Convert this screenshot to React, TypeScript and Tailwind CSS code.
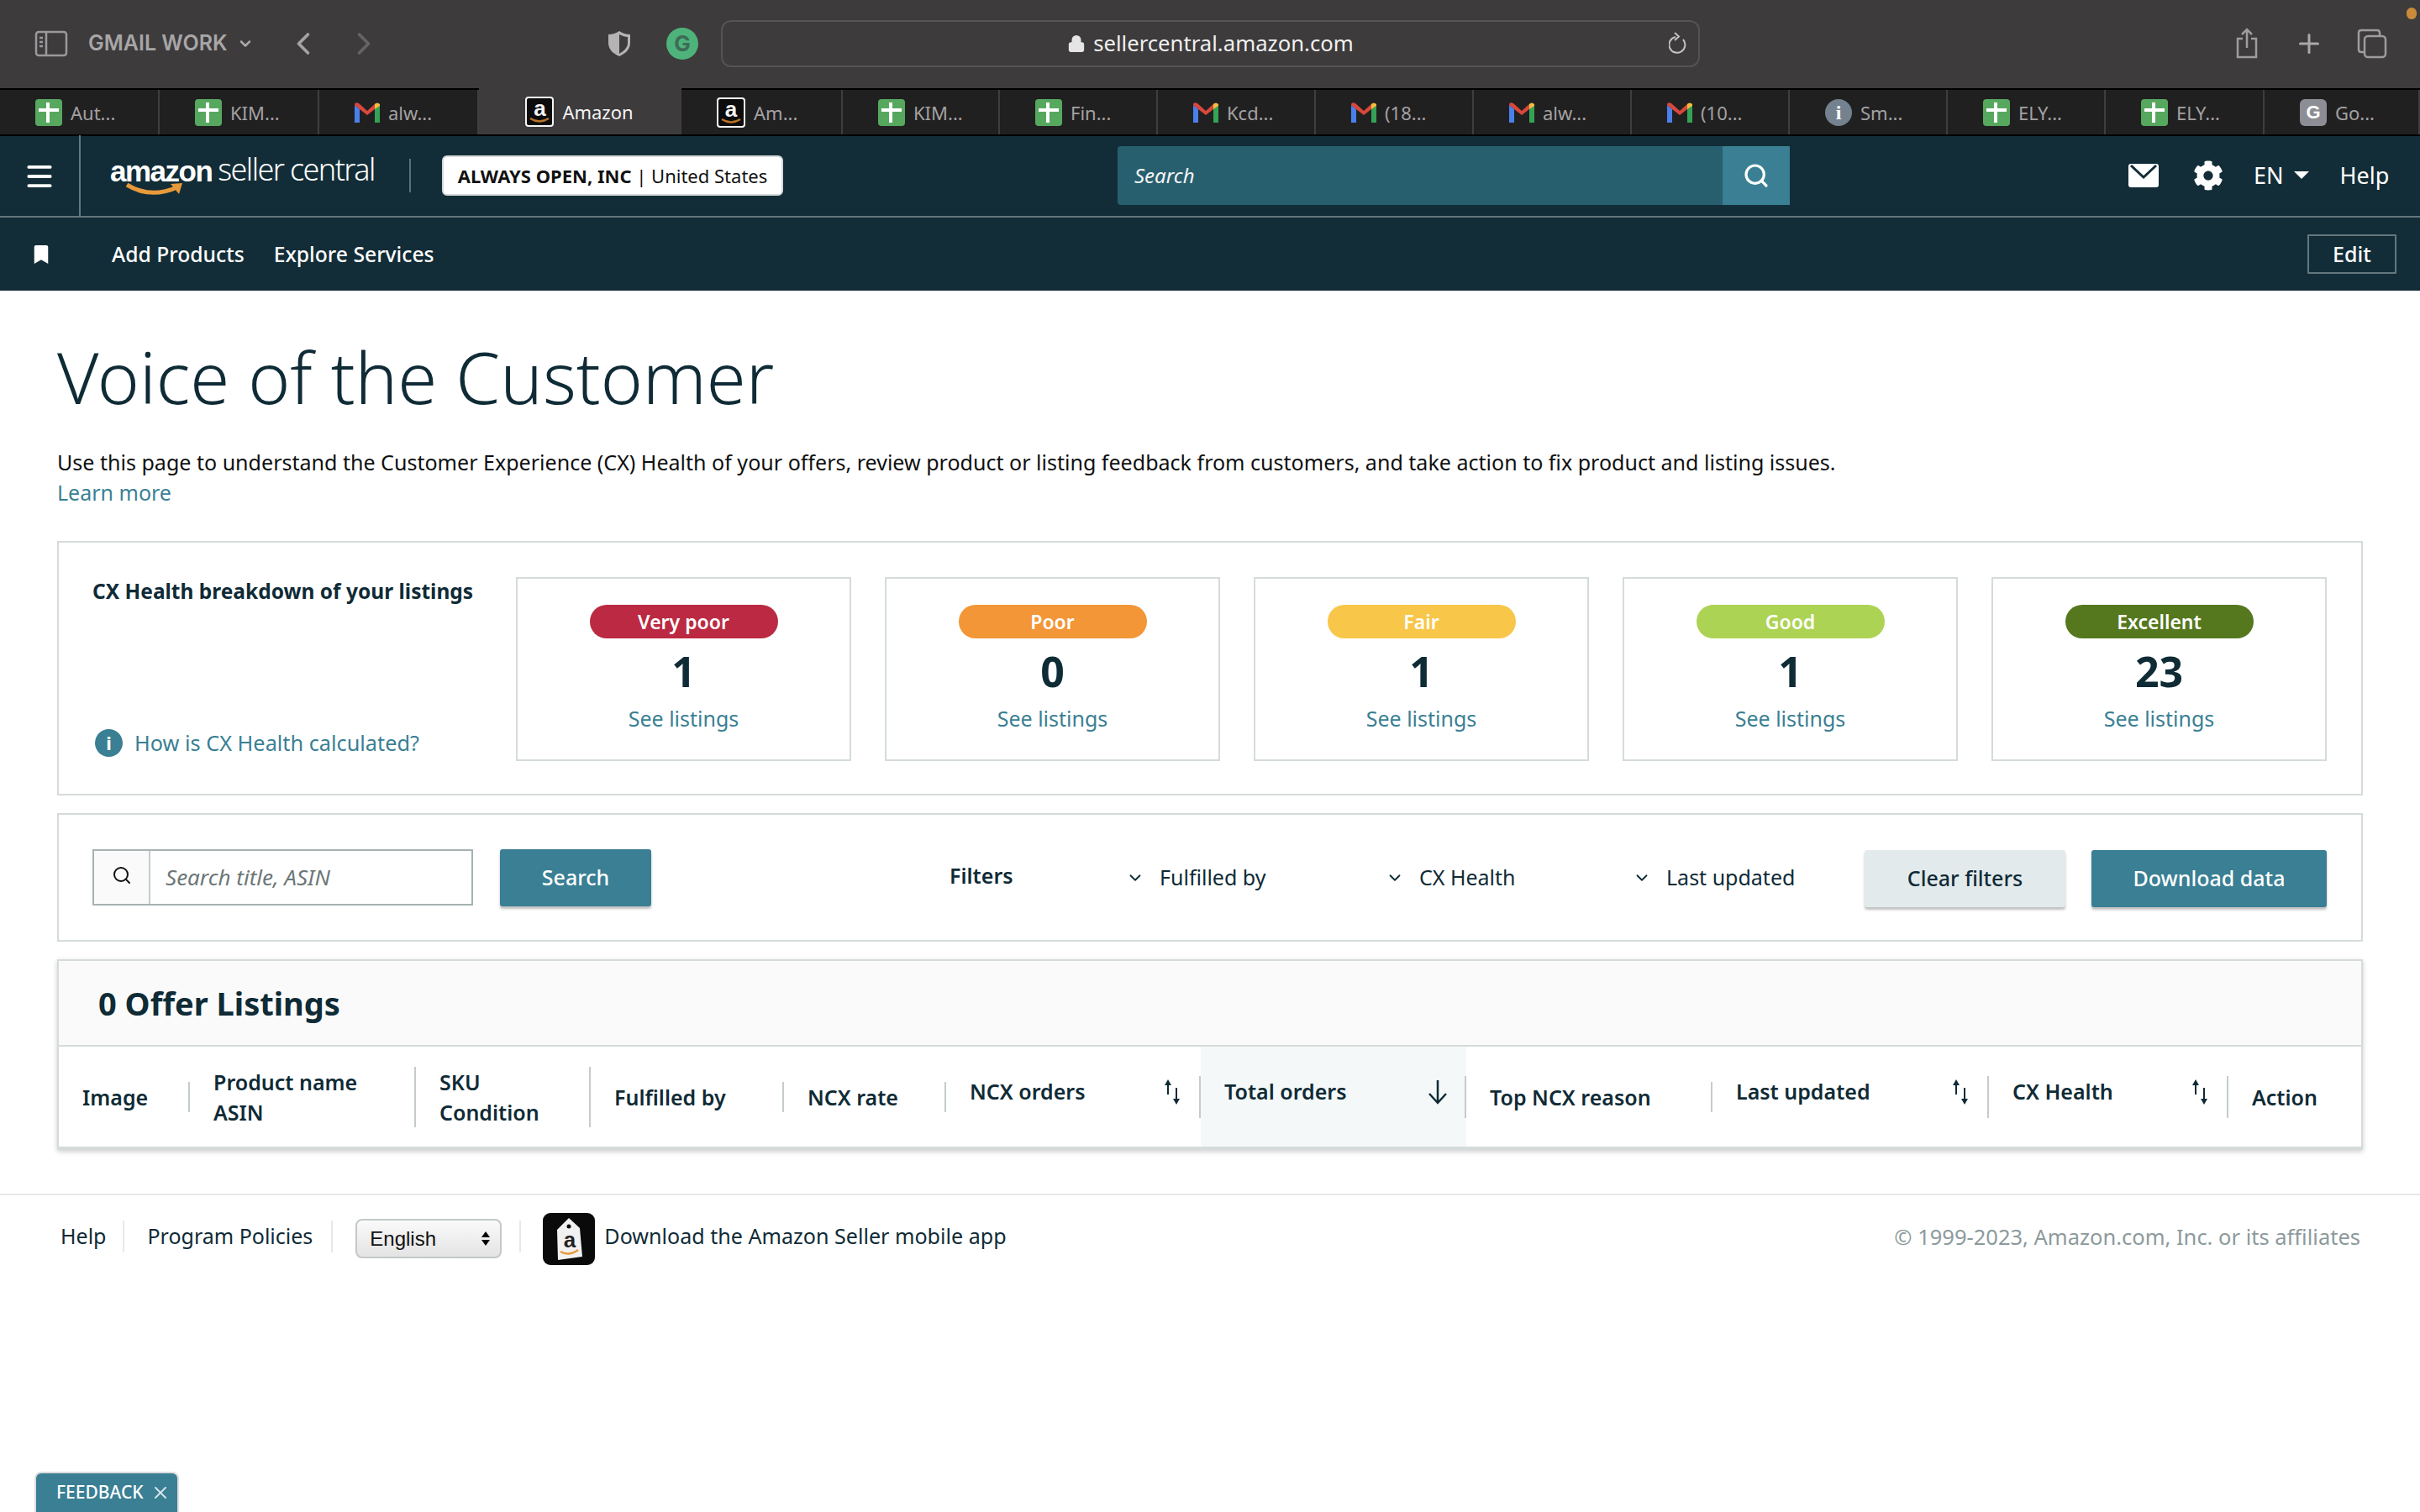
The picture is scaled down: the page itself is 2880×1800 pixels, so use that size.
import React from 'react';
import { ChevronLeft, ChevronRight, ChevronDown, Lock, Search, Plus, X, Menu } from 'lucide-react';
import { FaCog, FaBookmark } from 'react-icons/fa';

type TabKind = 'sheet' | 'gmail' | 'amazon' | 'info' | 'google';

const TABS: { kind: TabKind; label: string; width: string; active?: boolean }[] = [
    { kind: 'sheet', label: 'Aut...', width: 'w-[190px]' },
    { kind: 'sheet', label: 'KIM...', width: 'w-[190px]' },
    { kind: 'gmail', label: 'alw...', width: 'w-[190px]' },
    { kind: 'amazon', label: 'Amazon', width: 'w-[241px]', active: true },
    { kind: 'amazon', label: 'Am...', width: 'w-[192px]' },
    { kind: 'sheet', label: 'KIM...', width: 'w-[187px]' },
    { kind: 'sheet', label: 'Fin...', width: 'w-[188px]' },
    { kind: 'gmail', label: 'Kcd...', width: 'w-[188px]' },
    { kind: 'gmail', label: '(18...', width: 'w-[188px]' },
    { kind: 'gmail', label: 'alw...', width: 'w-[188px]' },
    { kind: 'gmail', label: '(10...', width: 'w-[188px]' },
    { kind: 'info', label: 'Sm...', width: 'w-[188px]' },
    { kind: 'sheet', label: 'ELY...', width: 'w-[188px]' },
    { kind: 'sheet', label: 'ELY...', width: 'w-[189px]' },
    { kind: 'google', label: 'Go...', width: 'flex-1' },
];

const HEALTH = [
    { label: 'Very poor', count: '1', color: 'bg-[#bb2a42]' },
    { label: 'Poor', count: '0', color: 'bg-[#f29637]' },
    { label: 'Fair', count: '1', color: 'bg-[#f8c648]' },
    { label: 'Good', count: '1', color: 'bg-[#add354]' },
    { label: 'Excellent', count: '23', color: 'bg-[#55781f]' },
];

const Favicon: React.FC<{ kind: TabKind }> = ({ kind }) => {
    if (kind === 'sheet') {
        return (
            <svg width="32" height="32" viewBox="0 0 32 32" className="shrink-0">
                <rect width="32" height="32" rx="4" fill="#57a85f" />
                <rect x="13" y="4" width="4" height="24" fill="#fff" />
                <rect x="4" y="11" width="24" height="4" fill="#fff" />
            </svg>
        );
    }
    if (kind === 'gmail') {
        return (
            <svg width="30" height="24" viewBox="0 0 30 24" className="shrink-0">
                <path d="M0 3 L0 24 L6 24 L6 8 Z" fill="#4a80ea" />
                <path d="M24 8 L24 24 L30 24 L30 3 Z" fill="#34a354" />
                <path d="M0 3 Q0 -1 5 1 L15 10 L25 1 Q27 0 24 8 L15 15 L6 8 L0 3 Z" fill="#d9483b" />
                <path d="M24 8 L24 2 Q27 -1 30 2 L30 4 Z" fill="#f4bd3f" />
            </svg>
        );
    }
    if (kind === 'amazon') {
        return (
            <div className="relative w-[34px] h-[36px] shrink-0 rounded-[4px] bg-[#0c0c0c] border-2 border-[#f5f5f5] flex justify-center text-[#f4f4f4] text-[26px] leading-[24px] font-bold font-['Liberation_Sans',sans-serif]">
                a
                <svg width="24" height="8" viewBox="0 0 24 8" className="absolute left-[3px] bottom-[1px]">
                    <path d="M1 1 Q12 8 23 1" stroke="#b9732a" strokeWidth="2.5" fill="none" />
                </svg>
            </div>
        );
    }
    if (kind === 'info') {
        return (
            <div className="w-8 h-8 shrink-0 rounded-full bg-[#73828e] flex items-center justify-center text-white text-[24px] font-bold font-['Liberation_Serif',serif]">i</div>
        );
    }
    return (
        <div className="w-8 h-8 shrink-0 rounded-md bg-[#8d8d96] flex items-center justify-center text-white text-[22px] font-bold font-['Liberation_Sans',sans-serif]">G</div>
    );
};

const BrowserBar: React.FC = () => (
    <div className="relative h-[105px] bg-[#3d3b3c] flex items-center pb-[2px] text-[#aaa8a9] font-['Inter',sans-serif]">
        <svg width="40" height="32" viewBox="0 0 40 32" className="ml-[41px] shrink-0" fill="none" stroke="#9b999a" strokeWidth="2.5">
            <rect x="2" y="2" width="36" height="28" rx="3" />
            <path d="M14 2 V30 M6 9 H10 M6 14 H10 M6 19 H10" />
        </svg>
        <span className="ml-[24px] text-[25px] leading-none font-semibold text-[#a8a6a7] whitespace-nowrap w-[170px]">GMAIL WORK</span>
        <ChevronDown size={20} strokeWidth={3} className="ml-[7px] text-[#aaa8a9]" />
        <ChevronLeft size={44} strokeWidth={2} className="ml-[37px] text-[#a5a3a4]" />
        <ChevronRight size={44} strokeWidth={2} className="ml-[28px] text-[#656364]" />
        <svg width="28" height="32" viewBox="0 0 28 32" className="ml-[268px] shrink-0">
            <path d="M14 1 C19 4 23 5 27 5 V15 C27 23 21 28 14 31 C7 28 1 23 1 15 V5 C5 5 9 4 14 1 Z" fill="#b5b3b4" />
            <path d="M14 5 C18 7 21 8 24 8 V15 C24 21 19 25 14 28 Z" fill="#3d3b3c" />
        </svg>
        <div className="ml-[42px] w-[38px] h-[38px] rounded-full bg-[#4eb37a] flex items-center justify-center text-[#3d6b58] text-[26px] font-bold shrink-0">G</div>
        <div className="relative ml-[27px] w-[1165px] h-[56px] rounded-xl border-2 border-[#555354] flex items-center justify-center">
            <Lock size={22} fill="#e5e5e5" className="text-[#e5e5e5] mr-[9px]" />
            <span className="text-[25.7px] leading-none text-[#f0f0f0] font-['Noto_Sans',sans-serif]">sellercentral.amazon.com</span>
            <svg width="22" height="28" viewBox="0 0 22 28" fill="none" stroke="#c4c2c3" strokeWidth="2" className="absolute right-[13px]">
                <path d="M8 6 A9.5 9.5 0 1 0 17 9 M7 1 L12 5.5 L7 10" />
            </svg>
        </div>
        <svg width="28" height="38" viewBox="0 0 28 38" fill="none" stroke="#9e9c9d" strokeWidth="2.5" className="ml-[637px] shrink-0">
            <path d="M9 13 H3 V35 H25 V13 H19 M14 24 V2 M8 8 L14 2 L20 8" />
        </svg>
        <Plus size={36} strokeWidth={2} className="ml-[42px] text-[#aaa8a9]" />
        <svg width="36" height="36" viewBox="0 0 36 36" fill="none" stroke="#9e9c9d" strokeWidth="2.5" className="ml-[39px] shrink-0">
            <rect x="9" y="9" width="25" height="25" rx="4" />
            <path d="M9 28 H5 Q2 28 2 25 V5 Q2 2 5 2 H24 Q27 2 27 5 V9" />
        </svg>
        <div className="absolute right-[4px] top-[9px] w-[12px] h-[14px] rounded-full bg-[#c98b3a]" />
    </div>
);

const TabStrip: React.FC = () => (
    <div className="flex h-[57px] bg-[#212021] border-y-2 border-black font-['Noto_Sans',sans-serif]">
        {TABS.map((tab, i) => (
            <div
                key={i}
                className={`${tab.width} flex items-center gap-[10px] border-r-2 border-[#3f3e3f] ${tab.active ? 'bg-[#3d3b3c] text-[#f2f2f2] justify-center -mt-[2px]' : 'text-[#a3a1a2] pl-[42px]'}`}
            >
                <Favicon kind={tab.kind} />
                <span className="text-[22px] leading-none whitespace-nowrap">{tab.label}</span>
            </div>
        ))}
    </div>
);

const SellerHeader: React.FC = () => (
    <div className="bg-[#122d37] text-white">
        <div className="flex items-center h-[97px] pb-[2px] border-b-2 border-[#63777d]">
            <div className="w-[96px] -mb-[2px] h-[97px] flex items-center justify-center border-r-2 border-[#63777d]">
                <Menu size={38} strokeWidth={2.4} />
            </div>
            <div className="relative ml-[35px] w-[320px] h-[56px] flex items-start whitespace-nowrap">
                <span className="text-[35px] leading-[46px] font-bold tracking-[-1.5px] font-['Liberation_Sans',sans-serif]">amazon</span>
                <span className="ml-[7px] text-[36px] leading-[42px] font-light tracking-[-1.6px] font-['Noto_Sans',sans-serif]">seller central</span>
                <svg width="70" height="20" viewBox="0 0 70 20" className="absolute left-[18px] top-[36px]">
                    <path d="M2 3 Q30 20 62 6" stroke="#e8993a" strokeWidth="5" fill="none" />
                    <path d="M54 2 L68 1 L64 14 Z" fill="#e8993a" />
                </svg>
            </div>
            <div className="ml-[36px] w-[2px] h-[40px] bg-[#5c7076]" />
            <div className="ml-[37px] w-[406px] h-[48px] rounded-md bg-white border-2 border-[#d5d9d9] flex items-center justify-center text-[#111] text-[22px] leading-none whitespace-nowrap">
                <span className="font-bold">ALWAYS OPEN, INC</span>
                <span>&nbsp;| United States</span>
            </div>
            <div className="ml-[398px] w-[800px] h-[70px] flex bg-[#285f6f] rounded-sm">
                <div className="flex-1 flex items-center pl-[20px] text-[24px] italic text-[#f4f4f4]">Search</div>
                <div className="w-[80px] bg-[#3a7f94] flex items-center justify-center">
                    <Search size={32} strokeWidth={2.4} />
                </div>
            </div>
            <svg width="36" height="28" viewBox="0 0 36 28" className="ml-[403px] shrink-0">
                <rect width="36" height="28" rx="3" fill="#fff" />
                <path d="M3 2 L18 16 L33 2" stroke="#122d37" strokeWidth="3" fill="none" />
            </svg>
            <FaCog size={36} className="ml-[41px]" />
            <span className="ml-[36px] text-[27px] leading-none">EN</span>
            <span className="ml-[12px] w-0 h-0 border-x-[9px] border-x-transparent border-t-[9px] border-t-white" />
            <span className="ml-[37px] text-[27px] leading-none">Help</span>
        </div>
        <div className="flex items-center h-[87px]">
            <FaBookmark size={22} className="ml-[38px]" />
            <span className="ml-[73px] text-[24.7px] font-medium">Add Products</span>
            <span className="ml-[35px] text-[24.7px] font-medium">Explore Services</span>
            <div className="ml-auto mr-[28px] w-[106px] h-[47px] border-2 border-[#63777d] flex items-center justify-center text-[25px] font-medium rounded-[1px]">Edit</div>
        </div>
    </div>
);

const HealthCard: React.FC<{ label: string; count: string; color: string }> = ({ label, count, color }) => (
    <div className="w-[399px] h-[219px] border-2 border-[#d5dbdb] flex flex-col items-center pt-[31px]">
        <div className={`w-[224px] h-[40px] rounded-full ${color} text-white text-[23px] font-semibold flex items-center justify-center`}>{label}</div>
        <div className="mt-[5px] text-[50px] leading-[68px] font-bold text-[#0f2b36]">{count}</div>
        <div className="mt-[5px] text-[25px] leading-[34px] text-[#3a7f94]">See listings</div>
    </div>
);

const SortIcon: React.FC = () => (
    <svg width="22" height="30" viewBox="0 0 22 30" className="mt-[4px] shrink-0 text-[#0f2b36]" fill="currentColor">
        <path d="M6 0 L10 7 H7 V18 H5 V7 H2 Z" />
        <path d="M15 10 H17 V23 H20 L16 30 L12 23 H15 Z" />
    </svg>
);

const SortedIcon: React.FC = () => (
    <svg width="28" height="30" viewBox="0 0 28 30" fill="none" stroke="currentColor" strokeWidth="2.5" className="mt-[4px] shrink-0 text-[#0f2b36]">
        <path d="M14 1 V28 M4 17 L14 28 L24 17" />
    </svg>
);

// one table header cell, divider on its right edge
const Th: React.FC<{ w: string; line?: string; children: React.ReactNode; className?: string }> = ({ w, line = 'h-[36px]', children, className = '' }) => (
    <div className={`relative ${w} h-full shrink-0 flex items-center pl-[28px] ${className}`}>
        {children}
        {line !== 'none' && <div className={`absolute right-0 top-1/2 -translate-y-1/2 w-[2px] ${line} bg-[#c4cccc]`} />}
    </div>
);

const Filter: React.FC<{ label: string; w: string }> = ({ label, w }) => (
    <div className={`${w} flex items-center gap-[18px] text-[25px] text-[#0f2b36] whitespace-nowrap`}>
        <ChevronDown size={22} strokeWidth={2} />
        <span>{label}</span>
    </div>
);

const App: React.FC = () => {
    return (
        <div className="relative w-[2880px] h-[1800px] overflow-hidden bg-white font-['Noto_Sans',sans-serif] text-[#0f2b36]">
            <BrowserBar />
            <TabStrip />
            <SellerHeader />

            <main className="px-[68px]">
                <h1 className="mt-[47px] text-[85px] leading-[110px] font-light text-[#0f2b36]">Voice of the Customer</h1>
                <p className="mt-[29px] text-[25.06px] leading-[36px] text-[#0f1111]">
                    Use this page to understand the Customer Experience (CX) Health of your offers, review product or listing feedback from customers, and take action to fix product and listing issues.
                </p>
                <p className="text-[25px] leading-[36px] text-[#3a7f94]">Learn more</p>

                <section className="mt-[40px] w-[2744px] h-[303px] border-2 border-[#d5dbdb] flex pt-[41px] pl-[40px]">
                    <div className="w-[504px] h-[219px] flex flex-col justify-between pb-[4px]">
                        <div className="text-[24.5px] leading-[36px] font-bold -mt-[1px]">CX Health breakdown of your listings</div>
                        <div className="flex items-center gap-[14px] pl-[3px] text-[25.3px] leading-[36px] text-[#3a7f94]">
                            <div className="w-[33px] h-[33px] rounded-full bg-[#3a7f94] text-white flex items-center justify-center text-[22px] font-bold">i</div>
                            How is CX Health calculated?
                        </div>
                    </div>
                    <div className="flex gap-[40px]">
                        {HEALTH.map((h) => (
                            <HealthCard key={h.label} {...h} />
                        ))}
                    </div>
                </section>

                <section className="mt-[21px] w-[2744px] h-[153px] border-2 border-[#d5dbdb] flex items-center pl-[40px]">
                    <div className="w-[453px] h-[67px] border-2 border-[#a6b2b2] flex">
                        <div className="w-[67px] bg-[#fafafa] border-r-2 border-[#c4cccc] flex items-center justify-center">
                            <Search size={24} strokeWidth={2} className="text-[#0f1111] -mt-[6px]" />
                        </div>
                        <div className="flex-1 flex items-center pl-[18px] text-[26px] italic text-[#6c7778]">Search title, ASIN</div>
                    </div>
                    <div className="ml-[32px] w-[180px] h-[68px] bg-[#3a7f94] rounded-[3px] shadow-[0_3px_3px_rgba(0,0,0,0.25)] text-white text-[25px] font-medium flex items-center justify-center">Search</div>
                    <div className="ml-[355px] w-[210px] text-[25px] font-semibold -mt-[3px]">Filters</div>
                    <Filter label="Fulfilled by" w="w-[309px]" />
                    <Filter label="CX Health" w="w-[294px]" />
                    <Filter label="Last updated" w="w-[276px]" />
                    <div className="w-[239px] h-[68px] bg-[#e3eaec] rounded-[3px] shadow-[0_3px_3px_rgba(0,0,0,0.25)] text-[25px] font-medium flex items-center justify-center mt-[2px] shrink-0">Clear filters</div>
                    <div className="ml-[31px] w-[280px] h-[68px] bg-[#3a7f94] rounded-[3px] shadow-[0_3px_3px_rgba(0,0,0,0.25)] text-white text-[25px] font-medium flex items-center justify-center mt-[2px] shrink-0">Download data</div>
                </section>

                <section className="mt-[21px] w-[2744px] h-[227px] border-x-2 border-t-2 border-b-4 border-[#d5dbdb] shadow-[0_2px_6px_rgba(0,0,0,0.2)]">
                    <div className="h-[102px] bg-[#fafafa] border-b-2 border-[#d5dbdb] flex items-center pl-[47px] text-[38px] font-bold">0 Offer Listings</div>
                    <div className="flex h-[119px] text-[25px] font-semibold leading-[36px]">
                        <Th w="w-[156px]">Image</Th>
                        <Th w="w-[269px]" line="h-[72px]"><div>Product name<br />ASIN</div></Th>
                        <Th w="w-[208px]" line="h-[72px]"><div>SKU<br />Condition</div></Th>
                        <Th w="w-[230px]">Fulfilled by</Th>
                        <Th w="w-[193px]">NCX rate</Th>
                        <Th w="w-[303px]" line="h-[50px]" className="justify-between pr-[23px] items-start pt-[35px]"><span>NCX orders</span><SortIcon /></Th>
                        <Th w="w-[316px] bg-[#f4f8f9]" line="h-[50px]" className="justify-between pr-[20px] items-start pt-[35px]"><span>Total orders</span><SortedIcon /></Th>
                        <Th w="w-[293px]">Top NCX reason</Th>
                        <Th w="w-[329px]" line="h-[50px]" className="justify-between pr-[23px] items-start pt-[35px]"><span>Last updated</span><SortIcon /></Th>
                        <Th w="w-[285px]" line="h-[50px]" className="justify-between pr-[23px] items-start pt-[35px]"><span>CX Health</span><SortIcon /></Th>
                        <Th w="flex-1" line="none">Action</Th>
                    </div>
                </section>
            </main>

            <footer className="mt-[52px] h-[100px] border-t-2 border-[#e7e9e9] flex items-center pl-[72px] pr-[71px] text-[25px]">
                <span>Help</span>
                <div className="ml-[20px] w-[2px] h-[38px] bg-[#e7e9e9]" />
                <span className="ml-[27px]">Program Policies</span>
                <div className="ml-[22px] w-[2px] h-[38px] bg-[#e7e9e9]" />
                <div className="ml-[27px] mt-[5px] w-[174px] h-[47px] rounded-lg border-2 border-[#c4c8c8] bg-gradient-to-b from-[#fafafa] to-[#e4e4e4] flex items-center justify-between pl-[15px] pr-[12px] text-[#111] text-[24px] font-['Liberation_Sans',sans-serif]">
                    <span>English</span>
                    <span className="flex flex-col gap-[3px]">
                        <span className="w-0 h-0 border-x-[5px] border-x-transparent border-b-[7px] border-b-black" />
                        <span className="w-0 h-0 border-x-[5px] border-x-transparent border-t-[7px] border-t-black" />
                    </span>
                </div>
                <div className="ml-[21px] w-[2px] h-[38px] bg-[#e7e9e9]" />
                <svg width="62" height="62" viewBox="0 0 62 62" className="ml-[26px] mt-[5px] shrink-0">
                    <rect width="62" height="62" rx="9" fill="#0a0a0a" />
                    <path d="M31 6 L44 18 L47 52 L18 56 L17 20 Z" fill="#f1f1f1" />
                    <circle cx="31" cy="16" r="2.5" fill="#0a0a0a" />
                    <path d="M21 46 Q31 52 42 44" stroke="#e8993a" strokeWidth="2.5" fill="none" />
                    <text x="32" y="41" textAnchor="middle" fontSize="26" fontWeight="700" fontFamily="Liberation Sans" fill="#222">a</text>
                </svg>
                <span className="ml-[11px] text-[25.1px]">Download the Amazon Seller mobile app</span>
                <span className="ml-auto text-[25.5px] text-[#8c9a9c]">© 1999-2023, Amazon.com, Inc. or its affiliates</span>
            </footer>

            <div className="absolute left-[41px] bottom-0 w-[172px] h-[48px] bg-[#3a7f94] border-x-2 border-t-2 border-[#dddddd] rounded-t-lg flex items-center pl-[24px] gap-[8px] text-white text-[21px] font-medium">
                FEEDBACK
                <X size={24} strokeWidth={2} className="text-[#d5e3e7]" />
            </div>
        </div>
    );
};

export default App;
